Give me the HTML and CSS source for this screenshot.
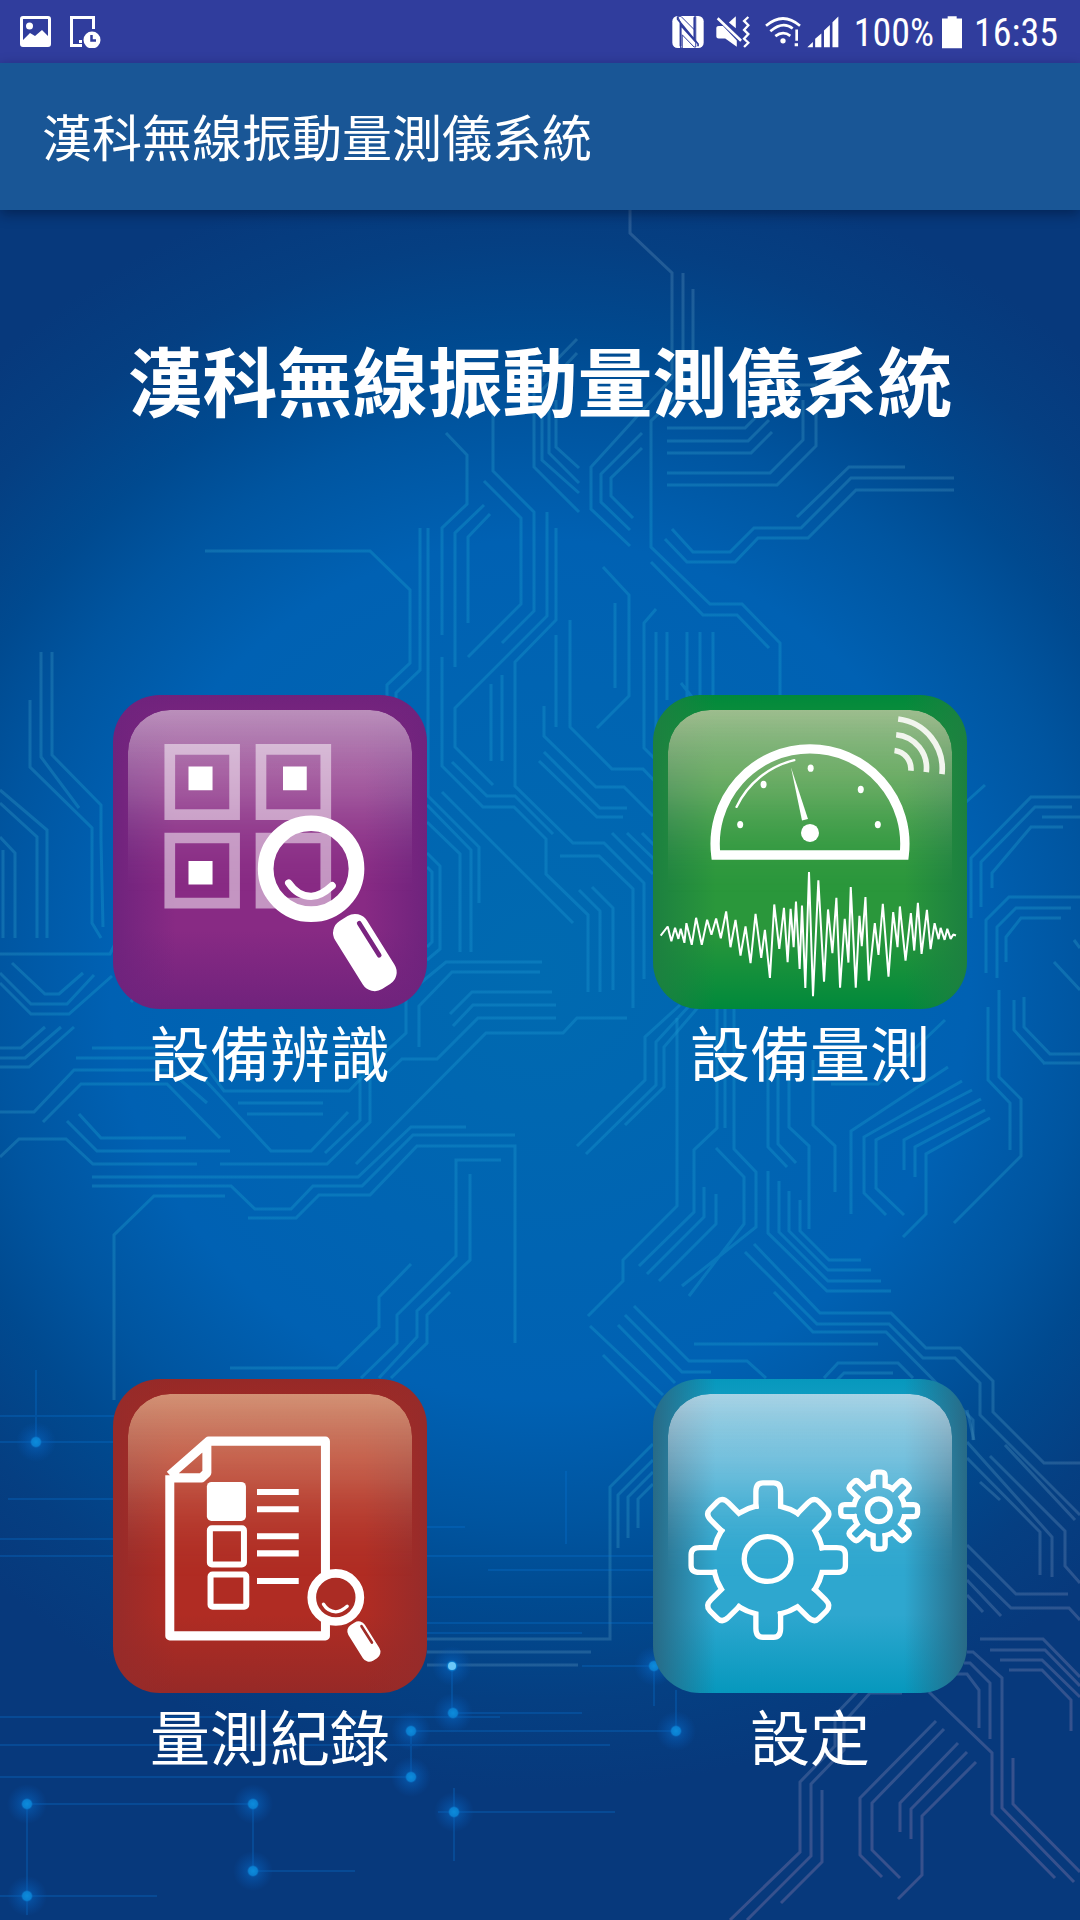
FILE: index.html
```html
<!DOCTYPE html>
<html lang="zh-Hant">
<head>
<meta charset="utf-8">
<meta name="viewport" content="width=device-width, initial-scale=1">
<title>漢科無線振動量測儀系統</title>
<link rel="stylesheet" href="styles.css">
</head>
<body>
<div class="status">
  <div class="status-group notices">
    <svg width="31" height="31" viewBox="0 0 31 31" aria-hidden="true"><path fill="#fff" fill-rule="evenodd" d="M3 0H28Q31 0 31 3V28Q31 31 28 31H3Q0 31 0 28V3Q0 0 3 0ZM3 3V24L10 17 15 20 22 14 28 20V3Z"/><circle cx="9.500" cy="10" r="3.500" fill="#fff"/></svg>
    <svg width="31" height="32" viewBox="0 0 31 32" aria-hidden="true"><path d="M23.500 13V1.500H1.500V29.500H12" fill="none" stroke="#fff" stroke-width="3"/><rect x="9" y="24" width="3" height="3" fill="#fff"/><circle cx="22" cy="24" r="8.500" fill="#fff"/><path d="M21.500 19V24.500H26" fill="none" stroke="#303d9d" stroke-width="2.500"/></svg>
  </div>
  <div class="status-group">
    <svg width="32" height="34" viewBox="94 44 97 101" aria-hidden="true"><rect x="95" y="46" width="95" height="97" rx="16" fill="#fff"/><g fill="none" stroke="#303d9d"><path d="M120 138V73L162 119V50" stroke-width="6"/><path d="M111 49V56L173 131V138" stroke-width="5"/><path d="M111 47H121L162 88V48H166V140H161L125 103V143H120V66Z" stroke-width="3"/></g></svg>
    <svg class="gap-m" width="34" height="34" viewBox="221 44 103 101" aria-hidden="true"><path fill="#fff" d="M260 66 281 47V83Z"/><path d="M227 52 298 120" stroke="#303d9d" stroke-width="15"/><path d="M226 53 297 121" stroke="#fff" stroke-width="8"/><path fill="#fff" d="M222 82Q222 76 229 76H242L284 120V139L249 114H229Q222 114 222 108Z"/><path d="M319 49 306 61 319 74 306 88 319 101 306 115 319 127 306 140" fill="none" stroke="#fff" stroke-width="7"/></svg>
    <svg class="gap-l" width="36" height="34" viewBox="371 44 108 101" aria-hidden="true"><g fill="none" stroke="#fff" stroke-width="8"><path d="M374 76Q425 32 476 76"/><path d="M387 92Q425 60 454 84"/><path d="M402 107Q425 89 447 106"/></g><circle cx="425" cy="121" r="8" fill="#fff"/><path fill="#fff" d="M462 87H470V121H462ZM460 128H470V137H460Z"/></svg>
    <svg class="gap-xs" width="32" height="34" viewBox="497 44 98 101" aria-hidden="true"><path fill="#fff" d="M498 141 515 125V141ZM522 141V115L541 99V141ZM549 141V90L567 73V141ZM575 141V65L593 47V141Z"/></svg>
    <span class="status-text gap-l">100%</span>
    <svg class="gap-s" width="20" height="34" viewBox="903 44 60 101" aria-hidden="true"><path fill="#fff" d="M920 47H947V54H963V143H903V54H920Z"/></svg>
    <span class="status-text gap-m">16:35</span>
  </div>
</div>
<header class="toolbar"><span class="toolbar-title">漢科無線振動量測儀系統</span></header>
<main class="home">
  <svg class="circuit" viewBox="0 210 1080 1710" preserveAspectRatio="xMidYMid slice" aria-hidden="true">
    <defs>
      <radialGradient id="trace" gradientUnits="userSpaceOnUse" cx="540" cy="970" r="940">
        <stop offset="0" stop-color="#1892ce" stop-opacity=".4"/>
        <stop offset=".5" stop-color="#1494c8" stop-opacity=".42"/>
        <stop offset=".68" stop-color="#408cb8" stop-opacity=".38"/>
        <stop offset="1" stop-color="#7a72a4" stop-opacity=".42"/>
      </radialGradient>
      <radialGradient id="glow">
        <stop offset="0" stop-color="#0c8cdc"/>
        <stop offset=".22" stop-color="#0a7ed0"/>
        <stop offset=".3" stop-color="#0664c0" stop-opacity=".5"/>
        <stop offset="1" stop-color="#0558b8" stop-opacity="0"/>
      </radialGradient>
      <circle id="node" r="20" fill="url(#glow)"/>
    </defs>
    <g fill="none" stroke="url(#trace)" stroke-width="3">
      <path d="M630 210V233L672 273V378L591 467V509L630 546M683 273V390L651 421V547L710 604H742L780 643V697M693 289V350M642 433 601 474V502L630 530M642 448 611 478V496L633 518"/>
      <path d="M577 339 534 383V467L579 512M577 353 542 390V460L579 493M549 390V453L579 483M556 400V447L579 468M493 413V471L534 512V611L502 643M484 481 521 518V604L468 657M446 433 467 455V504L442 528V635M484 505 455 533V667M490 514 468 537V623"/>
      <path d="M547 512V616L455 708V747L493 785M556 528V620L515 662V786L573 843H604L644 883V979M420 528V670L396 693V700M428 528V796L479 847V903M205 551H370L410 590V663L387 685V697M442 657V766L483 807H514L546 839V874L588 915V992M491 684V761M502 675V761M570 620V727L612 769H643L668 795M556 635V727M544 706V736L596 787H624L653 816M544 752 600 808H627M539 761 597 817H623"/>
      <path d="M452 762 487 796H515L553 834M442 792 573 923M427 805 471 850V952M427 822 460 854V952M427 853 440 866V949L427 960M427 867 432 872V942L427 947M615 603V688M603 567 629 595V696L597 728M656 609 644 623V748L656 760M656 632V760M667 632V700M687 632V697M700 632V697M713 632V697M681 683 692 697M651 562 703 615H737L769 648M672 529 693 552H730L754 528H801L851 478H954M665 539 687 562H735L758 538H808L856 490H954M797 517 849 467H905"/>
      <path d="M667 428H745L768 405M667 441H748L769 420M667 453H751L772 432M667 473H770L803 440V400M667 485H777L816 446V385H785M41 652V757L79 808M52 652V755L101 805V840L103 927M30 700V767L92 828V923L101 938M0 790 47 830V938M0 803 37 837V938M0 837 15 853V938M3 850V938M0 954H110L116 942M12 963 45 994H59L83 973M0 973 31 1004H67L94 975M0 983 31 1014H69L112 976M0 1048H21L45 1027M0 1058H25L61 1027M0 1067H29L74 1027M92 1048H158M76 1058H200L224 1091H349L372 1067V1045"/>
      <path d="M0 1112H34L74 1070H169L207 1103M43 1122 81 1084H167L220 1138M131 1002 140 990M205 1080 271 1151H311L348 1112M238 1103H323M247 1114H323M360 1060V1120L325 1153M370 1060V1122L327 1164H220M79 1114 101 1138H186M67 1121 97 1151H230M0 1157 19 1139H66L93 1164H197M92 1177H358L411 1127H466M92 1186H231L255 1209H291L313 1186H362L413 1135H515M248 1218H296L319 1195H370L417 1146H515V1343M225 1196H154L114 1235V1400M501 1160H456V1256L397 1315V1343L361 1378M470 1174V1260L417 1311V1337L379 1378M450 1292 427 1315V1343L391 1378M411 1264 379 1297V1327L337 1368H230"/>
      <path d="M542 962H446L412 990M419 1047V1006L452 972H540M552 992H472L450 1014M556 1005H473L453 1026M556 1018H478L437 1059H402L380 1080M627 1018H577L563 1033H486L356 1164M406 1000V1033L380 1057M560 856H599L633 889V1008M579 890 600 911V992M592 887 613 908V990M612 833 653 874M627 833 655 860M642 833 655 846"/>
      <path d="M677 1018V1206L623 1260V1281L588 1316M717 1008V1128L694 1150V1212L639 1266M725 1008V1128M734 1008V1149L756 1172V1227L682 1286M716 1148 744 1177V1224L689 1296M704 1187V1217L647 1274M716 1194V1224L659 1281M768 1060V1147L787 1167M778 1060V1144L796 1163M789 1060V1127L809 1146V1229M813 1060V1125L835 1146V1192M768 1171V1233L827 1291H891M779 1181V1232L828 1281H881M789 1191V1231L828 1270H871M800 1200V1231L829 1260H861"/>
      <path d="M754 1244 820 1313H891L926 1348H960L993 1381V1412L1044 1463H1080M745 1252 817 1324H889L923 1358H955L980 1383V1415L1080 1515M774 1292 813 1332H886L973 1420V1440M694 1344H878M824 1378 838 1363H898L913 1378M836 1381 844 1373H893M634 1306 689 1361H747L766 1378M625 1315 682 1372H711M618 1325 675 1383M590 1326 663 1395M603 1355 656 1408M680 1005 645 1037V1080L577 1146M690 1005 656 1042V1085L586 1154M700 1005 664 1047V1087L625 1125"/>
      <path d="M948 1067 851 1131V1214M962 1081 864 1137V1193L886 1215M972 1090 876 1140V1188L904 1215M981 1099 904 1140V1170M985 1110 915 1147V1177M990 1118 926 1154V1214L903 1237M988 1007V1080L1010 1103V1150M999 990V1077L1021 1099V1156L954 1223M831 1084H878L945 1020M1043 1063H1080M1024 997V1027L1050 1054H1080M1014 1000V1030L1045 1064M1054 962 1080 990M1074 940 1080 948M1080 797H1031L971 858V918M1072 807H1035L981 862V907M1063 827H1031L992 873V888M1080 817H1042M1080 897H1009L986 920V973M1071 908H1016L997 927V978M1061 918H1021L1006 937V962M965 803 985 785"/>
      <path d="M427 1639H610V1487L653 1444M427 1652H591M427 1665H578M618 1548V1495L653 1460M628 1538V1497L653 1472M638 1528V1499L653 1484M980 1639H1043L1080 1677M990 1650H1045L1080 1686M1000 1660H1042L1080 1697M1009 1670H1042L1071 1700V1731M967 1652H973L1002 1678V1808L1074 1882M964 1663H970L990 1683V1739M954 1674H967L979 1690V1728M929 1692 992 1753V1814L1055 1878M1013 1758V1804L1080 1872"/>
      <path d="M857 1692 835 1715V1746L800 1782V1852L730 1920M902 1693H870L844 1722V1750L811 1784V1856L747 1920M822 1790V1862L781 1903M936 1721 860 1798V1855L882 1877M944 1729 872 1803V1850L900 1878M958 1743 900 1803V1832M967 1752 911 1809V1839M976 1762 922 1816V1875L898 1899M967 1410 974 1440M967 1458 1040 1532V1575M967 1442 1052 1537V1577M980 1482 1000 1500M990 1456 1065 1531V1566L1080 1583M1005 1445 1075 1520M967 1545 1016 1594H1068M967 1565 1011 1608H1069L1080 1620M967 1580 1001 1616M967 1595 983 1612"/>
    </g>
    <g fill="none" stroke="#0877d8" stroke-opacity=".28" stroke-width="2">
      <path d="M36 1370V1442M0 1416H114M0 1442H114M8 1499H114M0 1539H114M0 1556H114M427 1556H653M427 1527H465M566 1471V1544M488 1570H653M427 1597H653M427 1623H653M427 1633H582M452 1666V1713H582M582 1666H654V1706M676 1690V1731H411V1777H0M0 1717H500M0 1745H610M27 1915V1804H253V1871H355M0 1896H157M454 1788V1861M438 1812H615"/>
    </g>
    <use href="#node" x="36" y="1442"/><use href="#node" x="452" y="1666"/><use href="#node" x="453" y="1713"/><use href="#node" x="654" y="1666"/><use href="#node" x="411" y="1731"/><use href="#node" x="676" y="1731"/><use href="#node" x="411" y="1777"/><use href="#node" x="27" y="1804"/><use href="#node" x="253" y="1804"/><use href="#node" x="27" y="1896"/><use href="#node" x="253" y="1871"/><use href="#node" x="454" y="1812"/>
    <circle cx="452" cy="1666" r="4" fill="#6cc8f8"/>
  </svg>
  <h1 class="headline">漢科無線振動量測儀系統</h1>
  <div class="menu">
    <button class="entry identify" type="button">
      <span class="tile"><svg viewBox="41 45 940 940" aria-hidden="true">
        <g fill="none" stroke="#fff" stroke-opacity=".5" stroke-width="32"><path d="M211 208H405V403H211ZM484 208H678V403H484ZM211 473H405V668H211ZM484 473H678V668H484Z"/></g>
        <path fill="#fff" d="M267 259H339V330H267ZM550 259H621V330H550ZM267 542H339V612H267Z"/>
        <circle cx="634" cy="565" r="136" fill="none" stroke="#fff" stroke-width="47"/>
        <path d="M567 608Q594 648 634 648 662 648 697 616" fill="none" stroke="#fff" stroke-width="22" stroke-linecap="round"/>
        <rect x="-56" y="-120" width="112" height="240" rx="42" fill="#fff" transform="translate(795 816) rotate(-32)"/>
        <path d="M778 728 838 824" stroke="#7a2480" stroke-width="14" stroke-linecap="round"/>
      </svg></span>
      <span class="caption">設備辨識</span>
    </button>
    <button class="entry measure" type="button">
      <span class="tile"><svg viewBox="41 45 940 940" aria-hidden="true">
        <path d="M229 524A284 284 0 1 1 793 524Z" fill="none" stroke="#fff" stroke-width="28"/>
        <path d="M291 380A258 258 0 0 1 464 240" fill="none" stroke="#fff" stroke-width="7" stroke-linecap="round"/>
        <g fill="#fff"><ellipse cx="302" cy="433" rx="9" ry="11"/><ellipse cx="372" cy="313" rx="9" ry="11"/><ellipse cx="513" cy="264" rx="9" ry="11"/><ellipse cx="663" cy="328" rx="9" ry="11"/><ellipse cx="714" cy="433" rx="9" ry="11"/><circle cx="511" cy="458" r="27"/><path d="M454 261 487 421 505 416Z"/></g>
        <g fill="none" stroke="#f2f5ee" stroke-width="17"><path d="M775 117A150 150 0 0 1 906 282"/><path d="M769 164A100 100 0 0 1 859 276"/><path d="M764 211A56 56 0 0 1 813 272"/></g>
        <path fill="none" stroke="#fff" stroke-width="6" d="M64 765 85 738 96 782 107 742 117 775 124 745 135 787 141 728 157 793 170 712 187 793 203 718 216 763 230 714 244 773 260 693 273 800 288 718 303 825 318 738 333 848 348 700 365 832 376 748 391 892 404 672 419 805 433 682 444 845 453 685 462 800 469 663 480 865 487 675 497 922 508 575 520 947 536 600 553 903 565 687 578 818 590 652 601 921 615 715 626 846 633 620 648 921 659 706 666 797 677 650 687 900 705 728 716 823 729 670 746 888 760 695 773 800 780 678 797 840 813 698 823 810 834 667 845 820 861 688 872 806 884 728 896 776 902 742 914 778 922 745 932 775 940 762 948 765" stroke-linejoin="bevel"/>
      </svg></span>
      <span class="caption">設備量測</span>
    </button>
    <button class="entry records" type="button">
      <span class="tile"><svg viewBox="41 57 940 940" aria-hidden="true">
        <path d="M211 345V826H677V243H327L211 345M211 353H306L322 338V243" fill="none" stroke="#fff" stroke-width="27" stroke-linejoin="round"/>
        <rect x="322" y="365" width="117" height="117" rx="14" fill="#fff"/>
        <g fill="none" stroke="#fff" stroke-width="18"><rect x="331" y="504" width="102" height="108" rx="6"/><rect x="333" y="642" width="107" height="97" rx="6"/><path d="M472 395H597M472 447H597M472 528H597M472 579H597M472 662H597"/></g>
        <circle cx="708" cy="711" r="72" fill="#ab2c24" stroke="#fff" stroke-width="26"/>
        <path d="M671 731Q684 753 708 754 724 753 742 737" fill="none" stroke="#fff" stroke-width="10" stroke-linecap="round"/>
        <rect x="-29" y="-63" width="58" height="126" rx="22" fill="#fff" transform="translate(792 843) rotate(-32)"/>
        <path d="M785 797 816 846" stroke="#9f2c27" stroke-width="8" stroke-linecap="round"/>
      </svg></span>
      <span class="caption">量測紀錄</span>
    </button>
    <button class="entry settings" type="button">
      <span class="tile"><svg viewBox="41 57 940 940" aria-hidden="true">
        <defs>
          <path id="big-tooth" d="M-37-161V-205Q-37-231-16-231H16Q37-231 37-205V-161A165 165 0 0 1 88-140"/>
          <path id="small-tooth" d="M-18-75V-103Q-18-115-6-115H6Q18-115 18-103V-75A77 77 0 0 1 40-66"/>
        </defs>
        <g fill="none" stroke="#fff" stroke-width="16" stroke-linecap="square">
          <g transform="translate(386 599)"><use href="#big-tooth"/><use href="#big-tooth" transform="rotate(45)"/><use href="#big-tooth" transform="rotate(90)"/><use href="#big-tooth" transform="rotate(135)"/><use href="#big-tooth" transform="rotate(180)"/><use href="#big-tooth" transform="rotate(225)"/><use href="#big-tooth" transform="rotate(270)"/><use href="#big-tooth" transform="rotate(315)"/></g>
          <g transform="translate(718 451)"><use href="#small-tooth"/><use href="#small-tooth" transform="rotate(45)"/><use href="#small-tooth" transform="rotate(90)"/><use href="#small-tooth" transform="rotate(135)"/><use href="#small-tooth" transform="rotate(180)"/><use href="#small-tooth" transform="rotate(225)"/><use href="#small-tooth" transform="rotate(270)"/><use href="#small-tooth" transform="rotate(315)"/></g>
          <ellipse cx="384" cy="596" rx="70" ry="67"/><circle cx="717" cy="450" r="34"/>
        </g>
      </svg></span>
      <span class="caption">設定</span>
    </button>
  </div>
</main>
</body>
</html>
```
FILE: styles.css
```css
* { box-sizing: border-box; }

body {
  margin: 0;
  min-height: 100vh;
  display: flex;
  flex-direction: column;
  color: #fff;
  font-family: "Noto Sans CJK TC", sans-serif;
  background: #07397c;
}

.status {
  display: flex;
  justify-content: space-between;
  align-items: center;
  height: 63px;
  padding: 0 22px 0 20px;
  background: #303d9d;
}

.status-group { display: flex; align-items: center; }
.notices { gap: 19px; }
.gap-xs { margin-left: 6px; }
.gap-s { margin-left: 8px; }
.gap-m { margin-left: 12px; }
.gap-l { margin-left: 15px; }

.status-text {
  font: 400 38px/44px "Roboto Condensed", "Liberation Sans Narrow", Roboto, sans-serif;
  padding-top: 2px;
}

.toolbar {
  position: relative;
  z-index: 1;
  display: flex;
  align-items: center;
  height: 147px;
  padding: 0 42px 4px;
  background: #195696;
  box-shadow: 0 4px 12px rgba(0, 10, 40, .45);
}

.toolbar-title { font-size: 50px; line-height: 72px; }

.home {
  position: relative;
  flex: 1;
  padding: 124px 0 145px;
  background: radial-gradient(circle at 50% 760px, #006ab0 0, #0061b3 430px, #0055a0 550px, #004a90 630px, #053f82 730px, #07397c 820px);
}

.circuit {
  position: absolute;
  inset: 0;
  width: 100%;
  height: 100%;
}

.headline {
  position: relative;
  margin: 0;
  font-size: 75px;
  line-height: 90px;
  font-weight: 700;
  text-align: center;
}

.menu {
  position: relative;
  display: grid;
  grid-template-columns: 1fr 1fr;
  row-gap: 294px;
  margin-top: 271px;
}

.entry {
  display: flex;
  flex-direction: column;
  align-items: center;
  gap: 8px;
  padding: 0;
  border: 0;
  background: none;
  color: inherit;
  font-family: inherit;
  cursor: pointer;
}

.tile {
  position: relative;
  display: block;
  width: 314px;
  height: 314px;
  border-radius: 47px;
  overflow: hidden;
  background:
    linear-gradient(to right, var(--side), transparent 20%, transparent 80%, var(--side)),
    linear-gradient(var(--cap), transparent 25%, transparent 75%, var(--cap)),
    var(--base);
}

.tile::before {
  content: "";
  position: absolute;
  inset: 15px 15px auto;
  height: 190px;
  border-radius: 42px 42px 0 0;
  background: linear-gradient(var(--gloss), transparent);
  mask-image: linear-gradient(#000, rgba(0, 0, 0, .75) 45%, transparent);
}

.tile svg { position: relative; display: block; width: 100%; height: 100%; }

.identify { --base: #882a84; --side: #6f237d; --cap: #70227c; --gloss: rgba(230, 210, 225, .62); }
.measure { --base: #2a973b; --side: #1c8040; --cap: #00893b; --gloss: rgba(235, 215, 185, .66); }
.records { --base: #b02c23; --side: #962b2a; --cap: #962927; --gloss: rgba(235, 190, 150, .7); }
.settings { --base: #2ea7cf; --side: #286a86; --cap: #0698bd; --gloss: rgba(235, 235, 245, .7); }

.caption { font-size: 60px; line-height: 68px; }
```
